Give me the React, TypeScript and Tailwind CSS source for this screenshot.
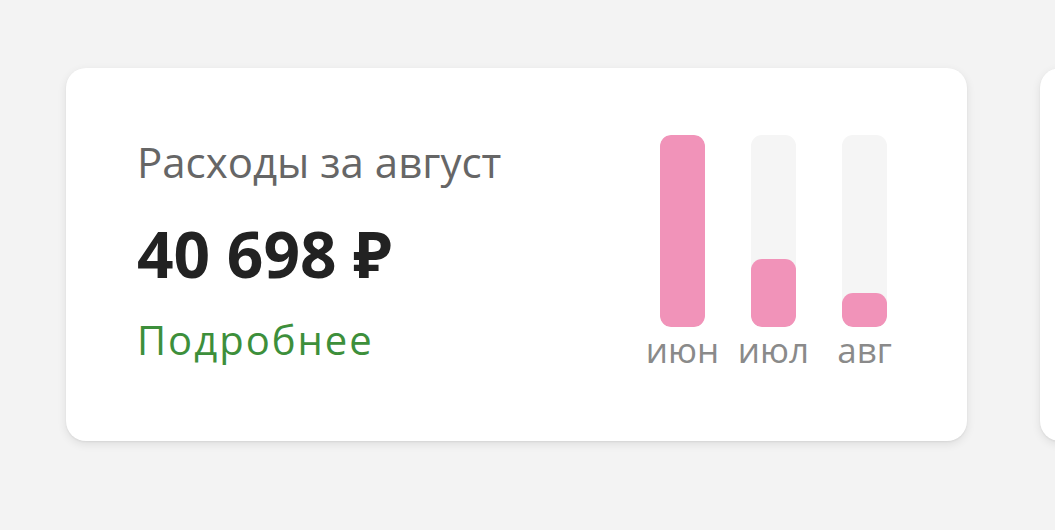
import React from "react";

const bars = [
  { label: "июн", h: 192 },
  { label: "июл", h: 68 },
  { label: "авг", h: 34 },
];

export default function App() {
  return (
    <div
      className="w-[1055px] h-[530px] overflow-hidden bg-[#f3f3f3] flex items-start gap-[73px] pl-[66px] pt-[68px]"
      style={{ fontFamily: '"Open Sans", "Noto Sans", sans-serif' }}
    >
      <div className="shrink-0 w-[901px] h-[373px] bg-white rounded-[20px] shadow-[0_3px_10px_rgba(0,0,0,0.09),0_1px_2px_rgba(0,0,0,0.06)] flex justify-between pl-[71px] pr-[80px]">
        <div className="flex flex-col pt-[65px]">
          <div className="text-[42px] leading-[57px] text-[#666666]">Расходы за август</div>
          <div className="mt-[20px] text-[64px] leading-[87px] font-bold text-[#222222]">40 698 ₽</div>
          <div className="mt-[16px] text-[40px] leading-[54px] tracking-[2px] text-[#3d8f3b]">Подробнее</div>
        </div>
        <div className="flex gap-[46px] pt-[67px]">
          {bars.map((b) => (
            <div key={b.label} className="w-[45px] flex flex-col items-center">
              <div className="w-[45px] h-[192px] bg-[#f5f5f5] rounded-[11px] flex flex-col justify-end overflow-hidden">
                <div className="w-full bg-[#f193b9] rounded-[11px]" style={{ height: b.h }} />
              </div>
              <div className="whitespace-nowrap text-[35px] leading-[46px] text-[#8a8a8a]">{b.label}</div>
            </div>
          ))}
        </div>
      </div>
      <div className="shrink-0 w-[901px] h-[373px] bg-white rounded-[20px] shadow-[0_3px_10px_rgba(0,0,0,0.09),0_1px_2px_rgba(0,0,0,0.06)]" />
    </div>
  );
}
